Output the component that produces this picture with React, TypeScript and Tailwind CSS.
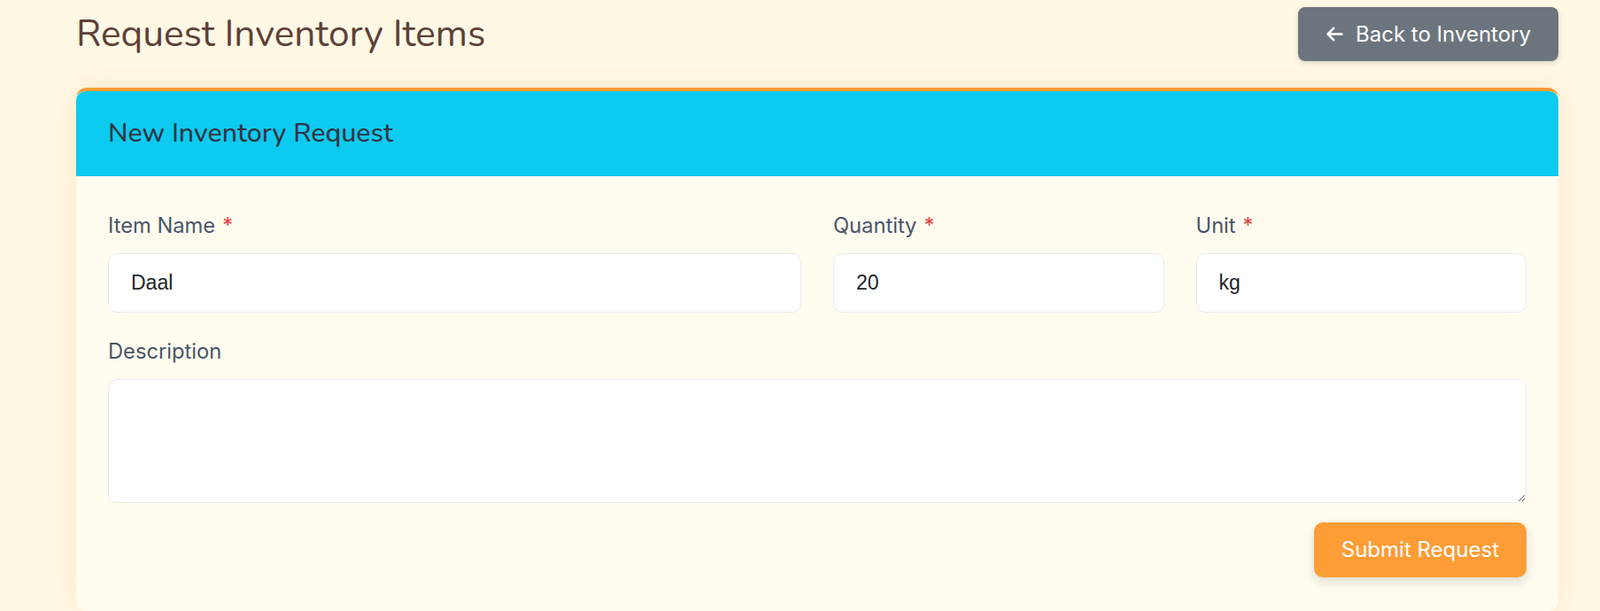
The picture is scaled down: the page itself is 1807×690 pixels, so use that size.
import { FaArrowLeft } from "react-icons/fa6";

export default function App() {
  return (
    <div className="min-h-screen w-full bg-[#fff8e5] font-['Inter',sans-serif]">
      <div className="pl-[86px] pr-[47px] pt-[8px]">
        {/* Page header */}
        <div className="flex h-[61px] items-center justify-between">
          <h1 className="font-['Nunito','Lato',sans-serif] text-[42.4px] font-normal leading-none text-[#5d4037]">
            Request Inventory Items
          </h1>
          <button className="flex h-[61px] items-center gap-[13px] rounded-[8px] bg-[#6c757d] px-[31px] text-[24px] text-white shadow-[0_2px_6px_rgba(0,0,0,0.15)]">
            <FaArrowLeft className="h-[21px] w-[21px]" />
            Back to Inventory
          </button>
        </div>

        {/* Card */}
        <div className="mt-[30px] overflow-hidden rounded-[12px] border-t-4 border-[#fe9c36] bg-[#fffcef] shadow-[0_0_30px_rgba(255,170,70,0.2)]">
          <div className="flex h-[96px] items-center rounded-t-[10px] bg-[#0dcaf0] px-[36px]">
            <h2 className="font-['Nunito','Lato',sans-serif] text-[30.3px] font-medium text-[#2f3645]">
              New Inventory Request
            </h2>
          </div>

          <form className="px-[36px] pt-[40px] pb-[38px]">
            <div className="grid grid-cols-12 gap-x-[36px]">
              <div className="col-span-6">
                <Label text="Item Name" required />
                <Input value="Daal" />
              </div>
              <div className="col-span-3">
                <Label text="Quantity" required />
                <Input value="20" />
              </div>
              <div className="col-span-3">
                <Label text="Unit" required />
                <Input value="kg" />
              </div>
            </div>

            <div className="mt-[28px]">
              <Label text="Description" />
              <textarea
                rows={3}
                className="block h-[140px] w-full rounded-[10px] border border-[#e8eaee] bg-white px-[25px] py-[14px] font-['Liberation_Sans',sans-serif] text-[23px] outline-none"
              />
            </div>

            <div className="mt-[22px] flex justify-end">
              <button
                type="button"
                className="h-[62px] rounded-[10px] bg-[#fe9c36] px-[31px] text-[24px] text-white shadow-[0_5px_12px_rgba(0,0,0,0.13)]"
              >
                Submit Request
              </button>
            </div>
          </form>
        </div>
      </div>
    </div>
  );
}

function Label({ text, required }: { text: string; required?: boolean }) {
  return (
    <label className="mb-[15px] block text-[23.7px] font-normal leading-[32px] text-[#4a5568]">
      {text}
      {required && <span className="ml-[8px] text-[#e53e3e]">*</span>}
    </label>
  );
}

function Input({ value }: { value: string }) {
  return (
    <input
      readOnly
      value={value}
      className="block h-[67px] w-full rounded-[10px] border border-[#e8eaee] bg-white px-[25px] font-['Liberation_Sans',sans-serif] text-[23px] text-[#212529] outline-none"
    />
  );
}
